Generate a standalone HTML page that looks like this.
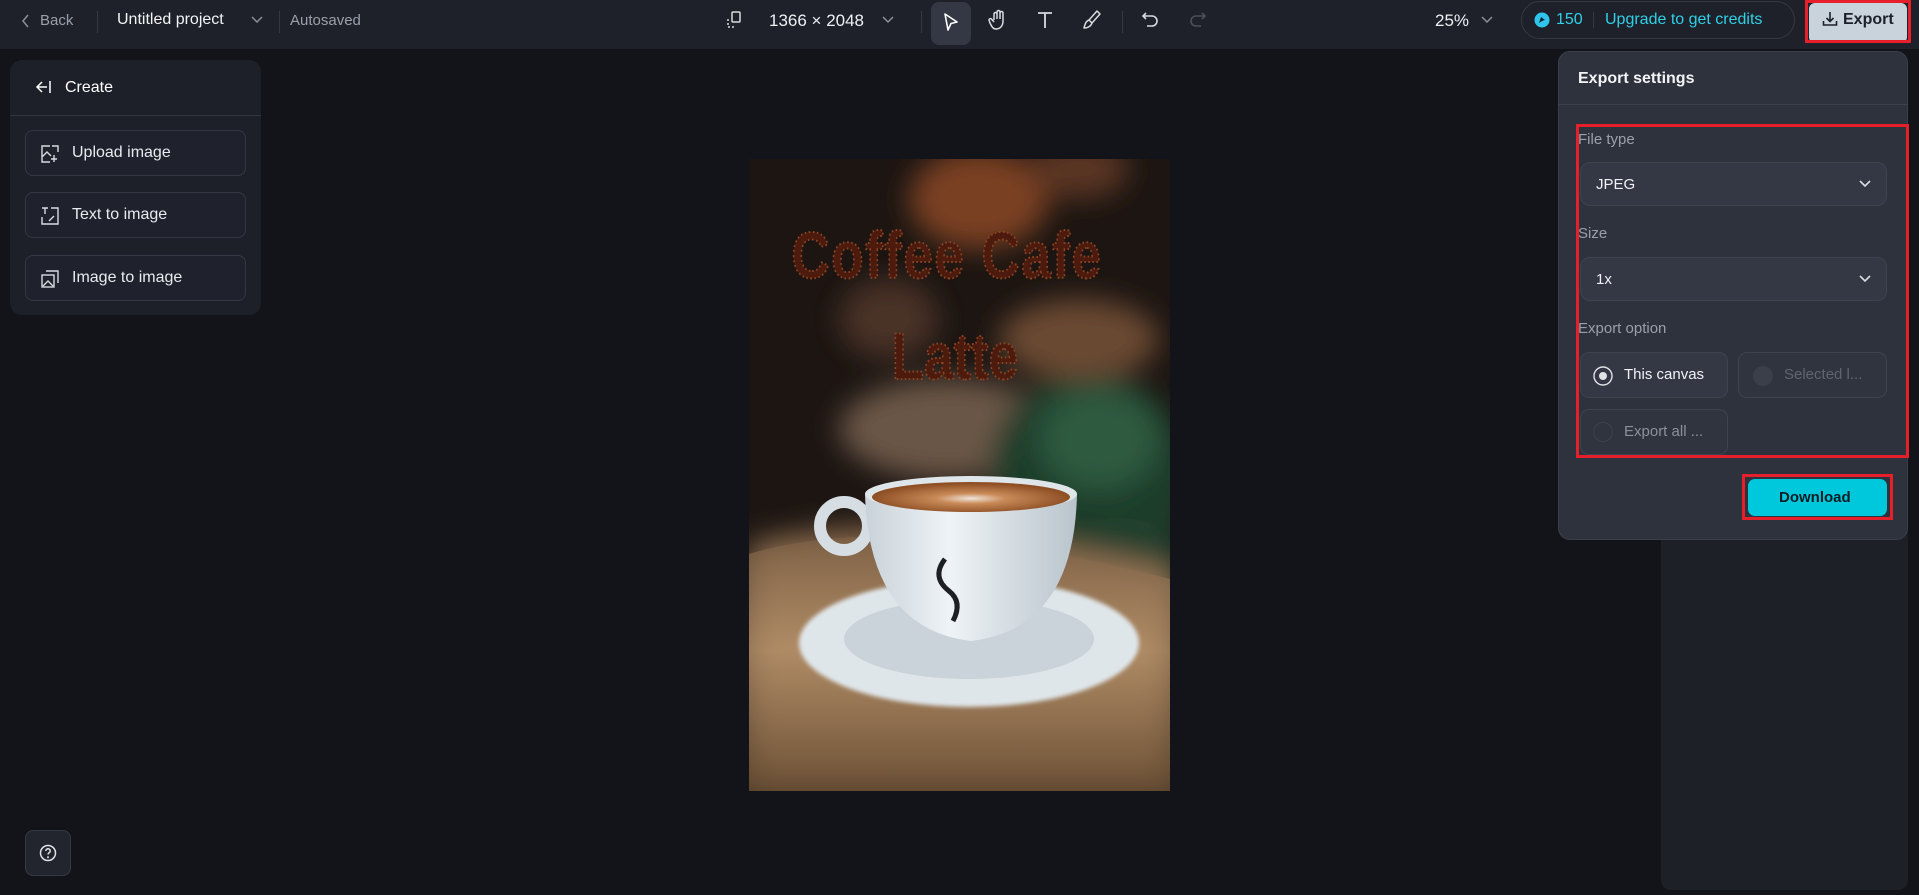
<!DOCTYPE html>
<html><head><meta charset="utf-8">
<style>
*{box-sizing:border-box;margin:0;padding:0}
body{width:1919px;height:895px;background:#131419;font-family:"Liberation Sans",sans-serif;position:relative;overflow:hidden;color:#fff}
.abs{position:absolute}
.top{left:0;top:0;width:1919px;height:49px;background:#1e2129}
.t{position:absolute;white-space:nowrap}
.div{position:absolute;width:1px;height:22px;top:11px;background:#353944}
.lp{left:10px;top:60px;width:251px;height:255px;background:#1d2029;border-radius:12px}
.btn{position:absolute;left:15px;width:221px;height:46px;border:1px solid #343844;border-radius:8px;background:#1f222c}
.btn span{position:absolute;left:46px;top:13px;font-size:16px;color:#e8eaee}
.btn svg{position:absolute;left:15px;top:14px}
.panel{left:1558px;top:51px;width:350px;height:489px;background:#2e323c;border:1px solid #3b3f4a;border-radius:12px}
.sel{position:absolute;left:1580px;width:307px;height:44px;border:1px solid #3e4350;border-radius:10px;background:#343845}
.sel span{position:absolute;left:15px;top:13px;font-size:15px;color:#f0f2f5}
.lab{position:absolute;font-size:15px;color:#9aa0aa}
.opt{position:absolute;height:46px;border:1px solid #3e4350;border-radius:9px;background:#343845}
.red{position:absolute;border:3px solid #e5202a}
</style></head><body>
<div class="abs top"></div>
<svg class="abs" style="left:21px;top:13px" width="10" height="16" viewBox="0 0 10 16"><path d="M7 2L2 8l5 6" stroke="#8a909a" stroke-width="1.5" fill="none"/></svg>
<div class="t" style="left:40px;top:12px;font-size:15px;color:#9aa0aa">Back</div>
<div class="div" style="left:97px"></div>
<div class="t" style="left:117px;top:11px;font-size:16px;color:#f2f4f6">Untitled project</div>
<svg class="abs" style="left:250px;top:15px" width="14" height="10"><path d="M2 2l5 5 5-5" stroke="#8a909a" stroke-width="1.5" fill="none"/></svg>
<div class="div" style="left:279px"></div>
<div class="t" style="left:290px;top:12px;font-size:15px;color:#9aa0aa">Autosaved</div>
<svg class="abs" style="left:725px;top:10px" width="18" height="20" viewBox="0 0 18 20"><rect x="7" y="2" width="8" height="10" rx="1" stroke="#d8dbe0" stroke-width="1.5" fill="none"/><path d="M3 9v8h8" stroke="#d8dbe0" stroke-width="1.5" fill="none" stroke-dasharray="2 2"/></svg>
<div class="t" style="left:769px;top:11px;font-size:17px;color:#eef0f3">1366 × 2048</div>
<svg class="abs" style="left:881px;top:15px" width="14" height="10"><path d="M2 2l5 5 5-5" stroke="#8a909a" stroke-width="1.5" fill="none"/></svg>
<div class="div" style="left:921px"></div>
<div class="abs" style="left:931px;top:2px;width:40px;height:43px;background:#343844;border-radius:8px"></div>
<svg class="abs" style="left:942px;top:12px" width="18" height="20"><path d="M3 2l12 8-6 1.5L6 18z" stroke="#fff" stroke-width="1.6" fill="none" stroke-linejoin="round"/></svg>
<svg class="abs" style="left:988px;top:9px" width="20" height="22" viewBox="0 0 20 22"><path d="M6 11V5a1.5 1.5 0 013 0v5M9 9V3a1.5 1.5 0 013 0v7M12 9V4a1.5 1.5 0 013 0v8c0 5-3 8-7 8-3 0-4-2-6-6l-1-3a1.5 1.5 0 012.5-1L6 13" stroke="#d8dbe0" stroke-width="1.5" fill="none"/></svg>
<svg class="abs" style="left:1036px;top:10px" width="18" height="20"><path d="M2 3h14M9 3v15" stroke="#d8dbe0" stroke-width="1.8" fill="none"/></svg>
<svg class="abs" style="left:1082px;top:9px" width="20" height="22"><path d="M15 2l3 3-8 9-3-3zM7 11l3 3c-1 3-4 5-8 5 1-4 2-7 5-8z" stroke="#d8dbe0" stroke-width="1.5" fill="none" stroke-linejoin="round"/></svg>
<div class="div" style="left:1122px"></div>
<svg class="abs" style="left:1141px;top:10px" width="20" height="20"><path d="M5 3L2 6l3 3M2 6h9a5 5 0 010 10H6" stroke="#d8dbe0" stroke-width="1.6" fill="none"/></svg>
<svg class="abs" style="left:1187px;top:10px" width="20" height="20"><path d="M15 3l3 3-3 3M18 6H9a5 5 0 000 10h5" stroke="#4a4f5a" stroke-width="1.6" fill="none"/></svg>
<div class="t" style="left:1435px;top:11px;font-size:17px;color:#eef0f3">25%</div>
<svg class="abs" style="left:1480px;top:15px" width="14" height="10"><path d="M2 2l5 5 5-5" stroke="#8a909a" stroke-width="1.5" fill="none"/></svg>
<div class="abs" style="left:1521px;top:1px;width:274px;height:38px;border:1px solid #353944;border-radius:19px"></div>
<svg class="abs" style="left:1534px;top:12px" width="16" height="16"><circle cx="8" cy="8" r="7.5" fill="#2fc4ea"/><path d="M5 11l2-6 4 3-3 1z" fill="#123"/></svg>
<div class="t" style="left:1556px;top:11px;font-size:16px;color:#2fd0e8">150</div>
<div class="abs" style="left:1593px;top:12px;width:1px;height:16px;background:#353944"></div>
<div class="t" style="left:1605px;top:11px;font-size:16px;color:#2fd0e8">Upgrade to get credits</div>
<div class="abs" style="left:1809px;top:3px;width:98px;height:40px;background:#c9d3dc;border-radius:6px"></div>
<svg class="abs" style="left:1822px;top:11px" width="16" height="16"><path d="M8 1v9M4.5 7L8 10.5 11.5 7M1.5 10v4h13v-4" stroke="#1d2029" stroke-width="1.6" fill="none"/></svg>
<div class="t" style="left:1843px;top:11px;font-size:16px;font-weight:bold;color:#1d2029">Export</div>
<div class="red" style="left:1805px;top:0;width:106px;height:43px"></div>
<div class="abs lp">
<svg class="abs" style="left:25px;top:20px" width="18" height="14"><path d="M7 2L2 7l5 5M2 7h10M15 1v12" stroke="#fff" stroke-width="1.5" fill="none"/></svg>
<div class="t" style="left:55px;top:19px;font-size:16px;color:#fff">Create</div>
<div class="abs" style="left:0;top:55px;width:251px;height:1px;background:#32363f"></div>
<div class="btn" style="top:70px"><svg width="18" height="18"><path d="M9 1H1v16h8M1 12l5-5 4 4M13 10v7M10 14h6M11 1h6v6" stroke="#d8dbe0" stroke-width="1.4" fill="none"/></svg><span>Upload image</span></div>
<div class="btn" style="top:132px"><svg width="18" height="18"><path d="M1 1h6M4 1v6M1 10v7h16V1h-7M8 14l5-5" stroke="#d8dbe0" stroke-width="1.4" fill="none"/></svg><span>Text to image</span></div>
<div class="btn" style="top:195px"><svg width="18" height="18"><rect x="1" y="5" width="12" height="12" stroke="#d8dbe0" stroke-width="1.4" fill="none"/><path d="M5 1h12v12M2 16l5-5 5 5" stroke="#d8dbe0" stroke-width="1.4" fill="none"/></svg><span>Image to image</span></div>
</div>
<div class="abs" style="left:25px;top:830px;width:46px;height:46px;background:#22252e;border:1px solid #353944;border-radius:8px"></div>
<svg class="abs" style="left:39px;top:844px" width="18" height="18"><circle cx="9" cy="9" r="7.5" stroke="#e0e2e6" stroke-width="1.5" fill="none"/><path d="M6.8 7a2.2 2.2 0 114 1.2c-.8.6-1.8 1-1.8 2.3" stroke="#e0e2e6" stroke-width="1.5" fill="none"/><circle cx="9" cy="13.2" r="1" fill="#e0e2e6"/></svg>
<svg class="abs" style="left:749px;top:159px" width="421" height="632" viewBox="0 0 421 632">
<defs>
<filter id="bl" x="-20%" y="-20%" width="140%" height="140%"><feGaussianBlur stdDeviation="14"/></filter>
<filter id="bl2"><feGaussianBlur stdDeviation="2"/></filter>
<linearGradient id="wood" x1="0" y1="0" x2="0" y2="1"><stop offset="0" stop-color="#7d6045"/><stop offset="0.45" stop-color="#b08c66"/><stop offset="1" stop-color="#6d5136"/></linearGradient>
<linearGradient id="cup" x1="0" y1="0" x2="1" y2="0"><stop offset="0" stop-color="#c9d2d9"/><stop offset="0.4" stop-color="#eef3f6"/><stop offset="1" stop-color="#b9c4cc"/></linearGradient>
<radialGradient id="foam" cx="0.5" cy="0.55" r="0.5"><stop offset="0" stop-color="#efe4da"/><stop offset="0.35" stop-color="#c98a58"/><stop offset="1" stop-color="#8e4f25"/></radialGradient>
</defs>
<rect width="421" height="632" fill="#1c1512"/>
<g filter="url(#bl)">
<ellipse cx="230" cy="40" rx="70" ry="50" fill="#7a4020"/>
<ellipse cx="330" cy="10" rx="50" ry="30" fill="#5a3420"/>
<ellipse cx="140" cy="160" rx="50" ry="40" fill="#4a3226"/>
<ellipse cx="200" cy="270" rx="110" ry="50" fill="#6a5646"/>
<ellipse cx="340" cy="320" rx="100" ry="110" fill="#1f3d2b"/>
<ellipse cx="350" cy="280" rx="60" ry="50" fill="#2f5a40"/>
<ellipse cx="380" cy="420" rx="60" ry="60" fill="#243f2e"/>
<ellipse cx="330" cy="180" rx="80" ry="40" fill="#6a4a30"/>
<path d="M0 385 Q150 340 421 410 L421 632 L0 632Z" fill="url(#wood)"/>
</g>
<path d="M0 395 Q150 350 421 420 L421 632 L0 632Z" fill="url(#wood)" opacity="0.7"/>
<g filter="url(#bl2)">
<ellipse cx="220" cy="484" rx="170" ry="64" fill="#dfe6ea"/>
</g>
<ellipse cx="220" cy="480" rx="125" ry="40" fill="#cad3d9"/>
<circle cx="95" cy="367" r="24" fill="none" stroke="#d6dee3" stroke-width="12"/>
<path d="M116 335 Q120 470 222 482 Q325 470 328 335Z" fill="url(#cup)"/>
<ellipse cx="222" cy="335" rx="106" ry="18" fill="#dfe6ea"/>
<ellipse cx="222" cy="338" rx="99" ry="15" fill="url(#foam)"/>
<path d="M196 400 q-14 18 4 32 q14 11 4 30" stroke="#1c2024" stroke-width="5" fill="none"/>
<g font-family="Liberation Sans,sans-serif" font-weight="bold" fill="#4d1a0e" stroke="#8a4424" stroke-width="2" stroke-dasharray="2 3">
<text x="198" y="119" font-size="66" text-anchor="middle" transform="translate(198 0) scale(0.8 1) translate(-198 0)" letter-spacing="2">Coffee Cafe</text>
<text x="206" y="220" font-size="66" text-anchor="middle" transform="translate(206 0) scale(0.8 1) translate(-206 0)">Latte</text>
</g>
</svg>
<div class="abs" style="left:1661px;top:520px;width:247px;height:370px;background:#1d2027;border-radius:0 0 10px 10px"></div>
<div class="abs panel"></div>
<div class="t" style="left:1578px;top:70px;font-size:16px;font-weight:bold;color:#f2f4f6">Export settings</div>
<div class="abs" style="left:1559px;top:104px;width:348px;height:1px;background:#3d414c"></div>
<div class="lab" style="left:1578px;top:131px">File type</div>
<div class="sel" style="top:162px"><span>JPEG</span><svg style="position:absolute;right:14px;top:16px" width="14" height="10"><path d="M2 2l5 5 5-5" stroke="#d8dbe0" stroke-width="1.6" fill="none"/></svg></div>
<div class="lab" style="left:1578px;top:225px">Size</div>
<div class="sel" style="top:257px"><span>1x</span><svg style="position:absolute;right:14px;top:16px" width="14" height="10"><path d="M2 2l5 5 5-5" stroke="#d8dbe0" stroke-width="1.6" fill="none"/></svg></div>
<div class="lab" style="left:1578px;top:320px">Export option</div>
<div class="opt" style="left:1580px;top:352px;width:148px"></div>
<svg class="abs" style="left:1593px;top:366px" width="20" height="20"><circle cx="10" cy="10" r="9" stroke="#e0e2e6" stroke-width="1.4" fill="none"/><circle cx="10" cy="10" r="4" fill="#e0e2e6"/></svg>
<div class="t" style="left:1624px;top:366px;font-size:15px;color:#f0f2f5">This canvas</div>
<div class="opt" style="left:1738px;top:352px;width:149px;background:#30343f"></div>
<div class="abs" style="left:1753px;top:366px;width:20px;height:20px;border-radius:50%;background:#3b3f4a"></div>
<div class="t" style="left:1784px;top:366px;font-size:15px;color:#5f6470">Selected l...</div>
<div class="opt" style="left:1580px;top:409px;width:148px;background:#30343f"></div>
<div class="abs" style="left:1593px;top:422px;width:20px;height:20px;border-radius:50%;border:1px solid #3d414c"></div>
<div class="t" style="left:1624px;top:423px;font-size:15px;color:#8b909a">Export all ...</div>
<div class="red" style="left:1576px;top:124px;width:333px;height:334px"></div>
<div class="abs" style="left:1748px;top:479px;width:139px;height:37px;background:#00c8dc;border-radius:7px"></div>
<div class="t" style="left:1779px;top:489px;font-size:15px;font-weight:bold;color:#0e1c24">Download</div>
<div class="red" style="left:1742px;top:474px;width:151px;height:46px"></div>
</body></html>
